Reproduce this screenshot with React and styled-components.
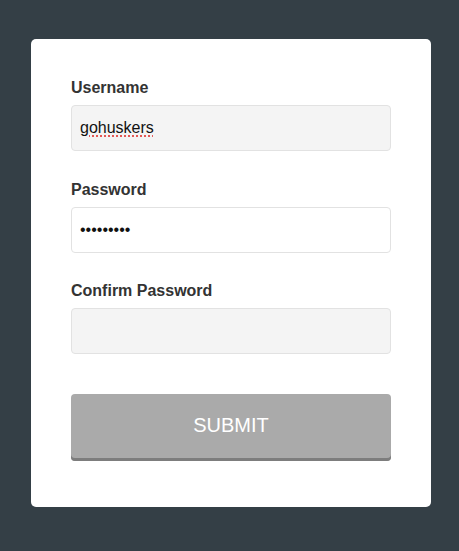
import styled, { createGlobalStyle } from "styled-components"

const GlobalStyle = createGlobalStyle`
  html, body {
    margin: 0;
    padding: 0;
    background: #343f46;
    font-family: "Liberation Sans", Arial, sans-serif;
  }
`

const Page = styled.div`
  width: 459px;
  height: 551px;
  padding: 39px 0 0 31px;
  box-sizing: border-box;
`

const Card = styled.form`
  width: 400px;
  height: 468px;
  box-sizing: border-box;
  padding: 39px 40px 0;
  background: #fff;
  border-radius: 5px;
  display: flex;
  flex-direction: column;
`

const Field = styled.div`
  display: flex;
  flex-direction: column;
  margin-bottom: ${(props) => (props.$tight ? "28px" : "29px")};
`

const Label = styled.label`
  font-size: 16px;
  line-height: 20px;
  font-weight: 700;
  color: #333;
  margin-bottom: 7px;
`

const Input = styled.input`
  height: 46px;
  box-sizing: border-box;
  padding: 0 8px;
  border: 1px solid #e2e2e2;
  border-radius: 4px;
  background: ${(props) => (props.$focused ? "#fff" : "#f4f4f4")};
  font-family: "Liberation Sans", Arial, sans-serif;
  font-size: 16px;
  color: #111;
  outline: none;
  text-decoration: ${(props) => (props.$misspelt ? "underline dotted #e0322f" : "none")};
  text-underline-offset: 3px;
`

const SubmitButton = styled.button`
  margin-top: 11px;
  height: 67px;
  border: none;
  border-radius: 4px;
  background: #aaa;
  box-shadow: inset 0 -3px 0 #7d7d7d;
  color: #fff;
  font-family: "Liberation Sans", Arial, sans-serif;
  font-size: 20px;
  padding: 0 0 5px;
  cursor: pointer;
`

export default function App() {
  return (
    <>
      <GlobalStyle />
      <Page>
        <Card onSubmit={(e) => e.preventDefault()}>
          <Field>
            <Label>Username</Label>
            <Input type="text" defaultValue="gohuskers" $misspelt />
          </Field>
          <Field $tight>
            <Label>Password</Label>
            <Input type="password" defaultValue="secret123" $focused />
          </Field>
          <Field>
            <Label>Confirm Password</Label>
            <Input type="password" />
          </Field>
          <SubmitButton type="submit">SUBMIT</SubmitButton>
        </Card>
      </Page>
    </>
  )
}
